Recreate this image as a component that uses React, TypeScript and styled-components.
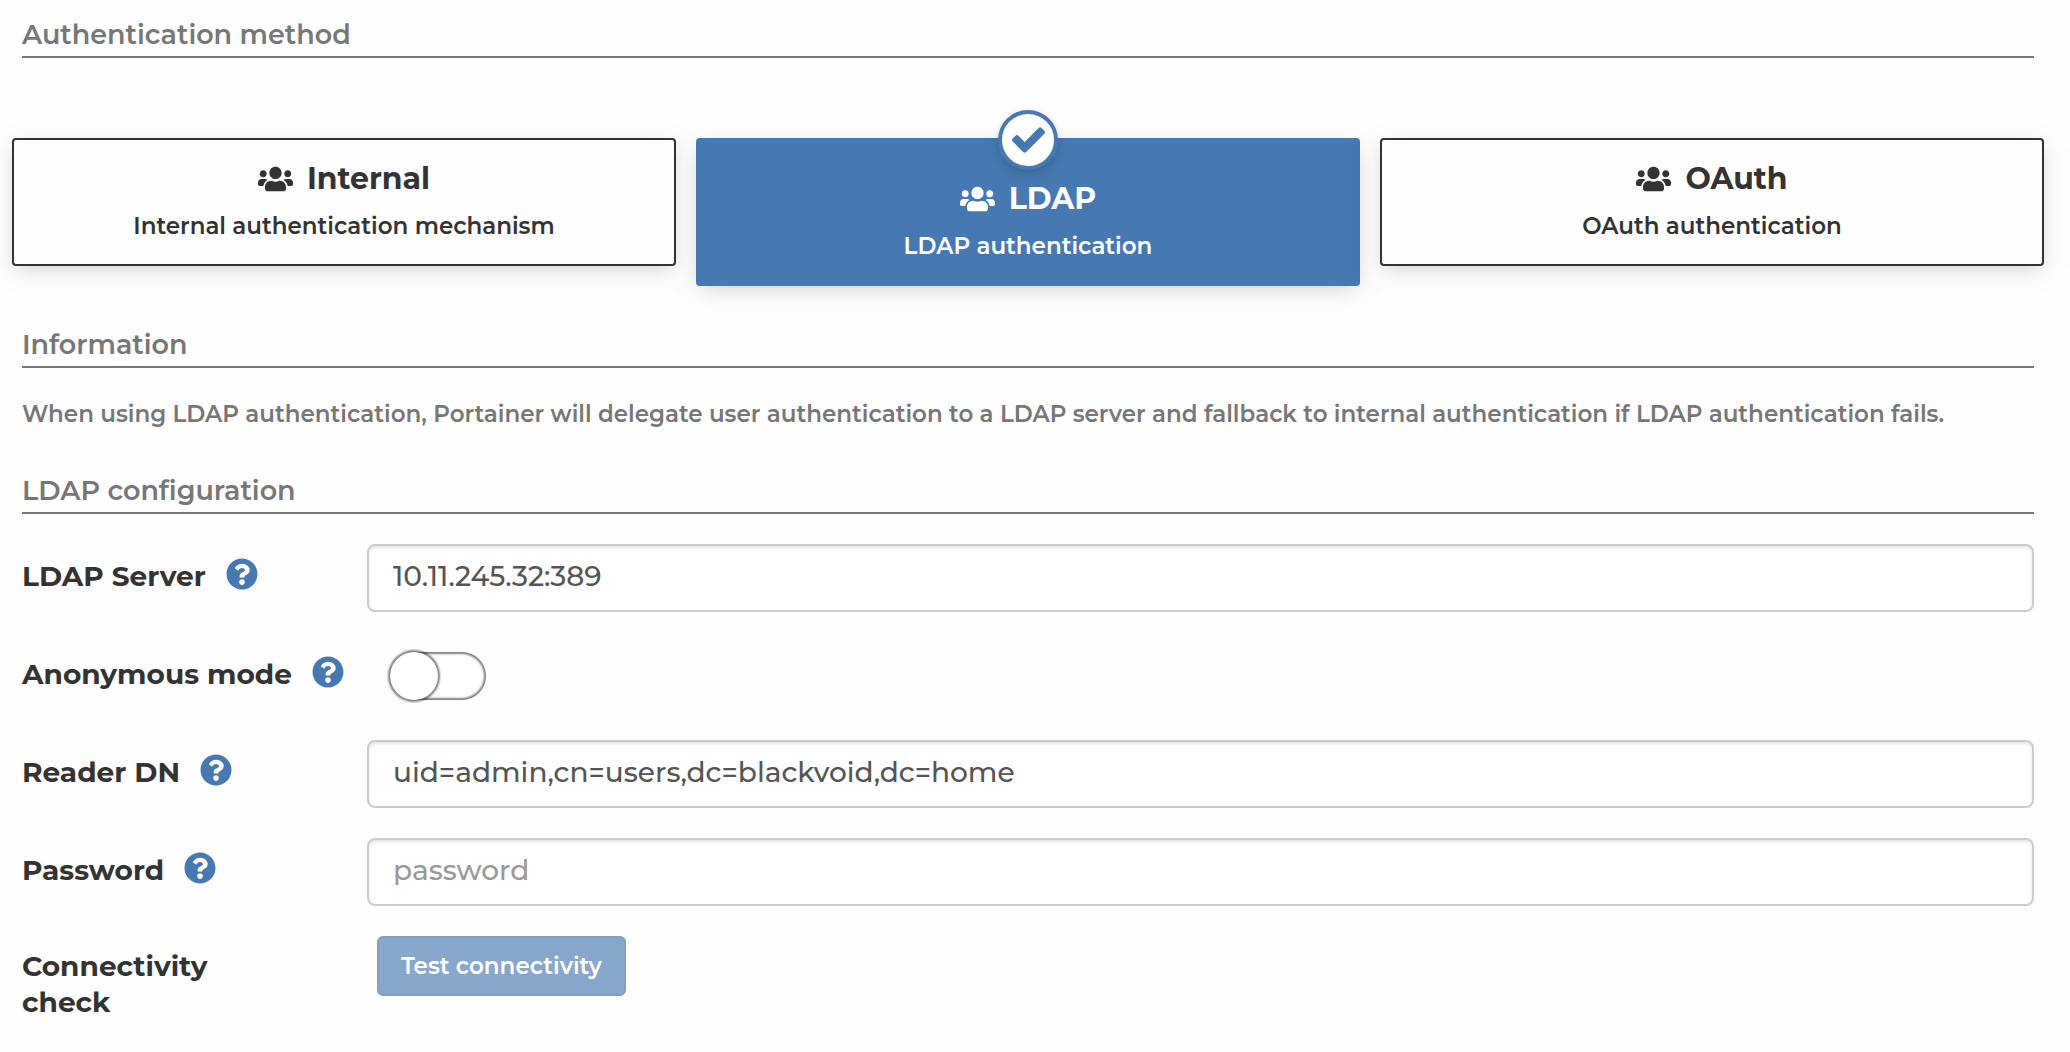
import React, { useState } from "react";
import styled, { createGlobalStyle, css } from "styled-components";
import { FaQuestionCircle, FaUsers } from "react-icons/fa";

const blue = "#4679b2";
const dark = "#333333";
const muted = "#777777";

const GlobalStyle = createGlobalStyle`
  *, *::before, *::after { box-sizing: border-box; }
  body {
    margin: 0;
    background: #fefefe;
    color: ${dark};
    font-family: Montserrat, Inter, "Noto Sans", sans-serif;
    font-size: 23px;
    font-weight: 600;
    line-height: 36px;
  }
  h2, p { margin: 0; }
`;

const Page = styled.form`
  display: flex;
  flex-direction: column;
  padding: 14px 36px 0 22px;
`;

const SectionTitle = styled.h2`
  height: 44px;
  border-bottom: 2px solid ${muted};
  color: ${muted};
  font-size: 27px;
  font-weight: 600;
  line-height: 42px;
`;

const MethodList = styled.fieldset`
  display: grid;
  grid-template-columns: repeat(3, minmax(0, 1fr));
  align-items: start;
  gap: 20px;
  min-width: 0;
  margin: 80px -10px 38px;
  padding: 0;
  border: 0;
`;

const MethodCard = styled.label<{ $active: boolean }>`
  position: relative;
  display: flex;
  flex-direction: column;
  align-items: center;
  gap: 9px;
  padding: 19px 20px 20px;
  border: 2px solid ${dark};
  border-radius: 4px;
  background: #fefefe;
  box-shadow: 0 6px 20px -4px rgba(160, 160, 160, 0.5);
  cursor: pointer;
  ${(p) =>
    p.$active &&
    css`
      padding-top: 39px;
      border-color: ${blue};
      background: ${blue};
      color: #ffffff;
    `}
`;

const MethodRadio = styled.input`
  position: absolute;
  opacity: 0;
`;

const MethodName = styled.span`
  display: flex;
  align-items: center;
  gap: 14px;
  font-size: 30px;
  font-weight: 700;
  line-height: 40px;

  svg {
    width: 35px;
    height: 28px;
  }
`;

const CheckBadge = styled.span`
  position: absolute;
  top: -30px;
  left: calc(50% - 30px);
  display: flex;
  align-items: center;
  justify-content: center;
  width: 60px;
  height: 60px;
  border: 4px solid ${blue};
  border-radius: 50%;
  background: #ffffff;
  box-shadow: 0 4px 10px rgba(0, 0, 0, 0.15);
  color: ${blue};
`;

const Info = styled.p`
  margin: 28px 0 38px;
  color: ${muted};
`;

const Fields = styled.div`
  display: flex;
  flex-direction: column;
  gap: 30px;
  margin-top: 30px;
`;

const Row = styled.div`
  display: grid;
  grid-template-columns: 345px minmax(0, 1fr);
  align-items: start;
  min-height: 68px;
`;

const LabelCell = styled.div<{ $narrow?: boolean }>`
  display: flex;
  align-items: center;
  gap: 20px;
  max-width: ${(p) => (p.$narrow ? "240px" : "none")};
  padding-top: ${(p) => (p.$narrow ? "12px" : "14px")};
  font-size: 28px;
  font-weight: 700;
`;

const Help = styled.span`
  display: flex;
  margin-bottom: 4px;
  color: ${blue};
  font-size: 32px;
`;

const TextBox = styled.input`
  width: 100%;
  height: 68px;
  padding: 0 24px 4px;
  border: 2px solid #cccccc;
  border-radius: 8px;
  background: #ffffff;
  box-shadow: inset 0 2px 3px rgba(0, 0, 0, 0.1);
  color: #555555;
  font: inherit;
  font-size: 28px;
  font-weight: 500;
  outline: 0;

  &::placeholder {
    color: #999999;
    opacity: 1;
  }
`;

const Switch = styled.input`
  appearance: none;
  display: flex;
  align-items: center;
  width: 96px;
  height: 48px;
  margin: 10px 0 0 23px;
  border-radius: 24px;
  background: #ffffff;
  box-shadow: inset 0 0 2px 2px rgba(0, 0, 0, 0.5);
  cursor: pointer;

  &::before {
    content: "";
    width: 48px;
    height: 48px;
    flex: none;
    border-radius: 50%;
    background: #ffffff;
    box-shadow: 0 0 2px 2px rgba(0, 0, 0, 0.5);
  }

  &:checked {
    justify-content: flex-end;
    background: ${blue};
  }
`;

const TestButton = styled.button`
  justify-self: start;
  height: 60px;
  margin-left: 10px;
  padding: 0 22px;
  border: 2px solid #809fc4;
  border-radius: 6px;
  background: #87a7cd;
  color: #ffffff;
  font: inherit;
`;

const methods = [
  { id: "internal", name: "Internal", text: "Internal authentication mechanism" },
  { id: "ldap", name: "LDAP", text: "LDAP authentication" },
  { id: "oauth", name: "OAuth", text: "OAuth authentication" },
];

function CheckIcon() {
  return (
    <svg width="33" height="26" viewBox="121 334 1550 1188" fill="currentColor" aria-hidden>
      <path d="M1671 566q0 40-28 68l-724 724-136 136q-28 28-68 28t-68-28l-136-136-362-362q-28-28-28-68t28-68l136-136q28-28 68-28t68 28l294 295 656-657q28-28 68-28t68 28l136 136q28 28 28 68z" />
    </svg>
  );
}

function FieldLabel({ id, text }: { id: string; text: string }) {
  return (
    <LabelCell>
      <label htmlFor={id}>{text}</label>
      <Help>
        <FaQuestionCircle aria-hidden />
      </Help>
    </LabelCell>
  );
}

export default function App() {
  const [method, setMethod] = useState("ldap");
  const [anonymous, setAnonymous] = useState(false);

  return (
    <>
      <GlobalStyle />
      <Page onSubmit={(e) => e.preventDefault()}>
        <SectionTitle>Authentication method</SectionTitle>
        <MethodList aria-label="Authentication method">
          {methods.map((m) => (
            <MethodCard key={m.id} $active={m.id === method}>
              <MethodRadio
                type="radio"
                name="method"
                checked={m.id === method}
                onChange={() => setMethod(m.id)}
              />
              {m.id === method && (
                <CheckBadge>
                  <CheckIcon />
                </CheckBadge>
              )}
              <MethodName>
                <FaUsers aria-hidden />
                {m.name}
              </MethodName>
              <span>{m.text}</span>
            </MethodCard>
          ))}
        </MethodList>

        <SectionTitle>Information</SectionTitle>
        <Info>
          When using LDAP authentication, Portainer will delegate user authentication to a LDAP
          server and fallback to internal authentication if LDAP authentication fails.
        </Info>

        <SectionTitle>LDAP configuration</SectionTitle>
        <Fields>
          <Row>
            <FieldLabel id="server" text="LDAP Server" />
            <TextBox id="server" type="text" defaultValue="10.11.245.32:389" />
          </Row>
          <Row>
            <FieldLabel id="anonymous" text="Anonymous mode" />
            <Switch
              id="anonymous"
              type="checkbox"
              checked={anonymous}
              onChange={(e) => setAnonymous(e.target.checked)}
            />
          </Row>
          <Row>
            <FieldLabel id="reader" text="Reader DN" />
            <TextBox
              id="reader"
              type="text"
              defaultValue="uid=admin,cn=users,dc=blackvoid,dc=home"
            />
          </Row>
          <Row>
            <FieldLabel id="password" text="Password" />
            <TextBox id="password" type="password" placeholder="password" />
          </Row>
          <Row>
            <LabelCell $narrow>
              <label htmlFor="test">Connectivity check</label>
            </LabelCell>
            <TestButton id="test" type="button">
              Test connectivity
            </TestButton>
          </Row>
        </Fields>
      </Page>
    </>
  );
}
